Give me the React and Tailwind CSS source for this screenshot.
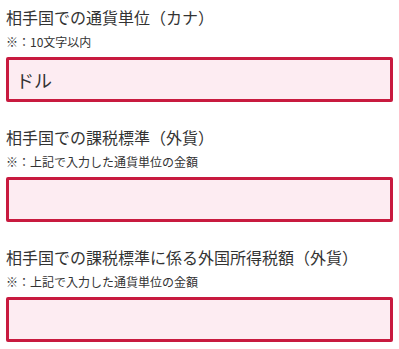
import React from "react"

const fields = [
  { label: "相手国での通貨単位（カナ）", note: "※：10文字以内", value: "ドル" },
  { label: "相手国での課税標準（外貨）", note: "※：上記で入力した通貨単位の金額", value: "" },
  { label: "相手国での課税標準に係る外国所得税額（外貨）", note: "※：上記で入力した通貨単位の金額", value: "" },
]

const Field = ({ f }) => (
  <div className="mb-[23px]">
    <label className="block text-[16px] leading-6 text-[#333]">{f.label}</label>
    <div className="mt-[4px] text-[12px] leading-[18px] text-[#333]">{f.note}</div>
    <input
      type="text"
      defaultValue={f.value}
      className="mt-[6px] block h-[45px] w-[387px] rounded-[2px] border-[3px] border-[#c81a3f] bg-[#fdecf2] px-[7px] text-[18px] text-[#333] outline-none"
    />
  </div>
)

export default function App() {
  return (
    <div
      className="h-[349px] w-[399px] overflow-hidden bg-white pl-[6px] pt-[5px]"
      style={{ fontFamily: '"Noto Sans CJK JP", "Noto Sans", sans-serif' }}
    >
      {fields.map((f, i) => (
        <Field key={i} f={f} />
      ))}
    </div>
  )
}
